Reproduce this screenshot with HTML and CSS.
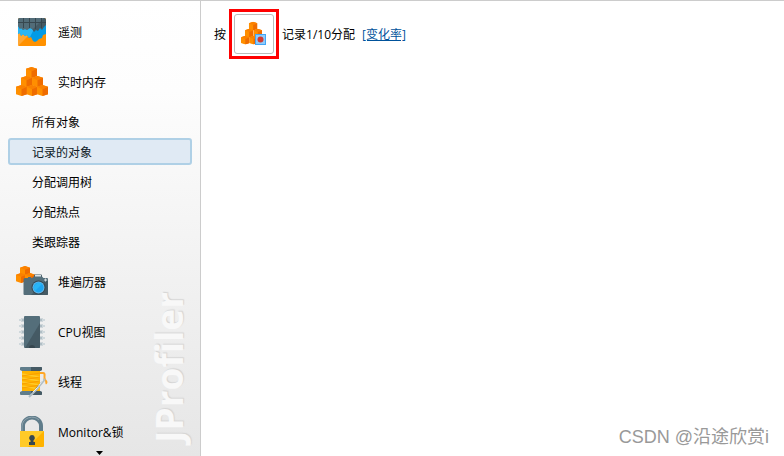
FILE: index.html
```html
<!DOCTYPE html>
<html lang="zh-CN">
<head>
<meta charset="utf-8">
<title>JProfiler</title>
<link rel="stylesheet" href="styles.css">
</head>
<body>
<svg class="defs" aria-hidden="true">
  <symbol id="cube" viewBox="0 0 12 12">
    <path fill="#ff8f00" d="M6 0 12 2v8l-6 2-6-2V2z"/>
    <path fill="#fb8100" d="M6 0 12 2 6 4.500 0 2z"/>
    <path fill="#ef6c00" d="M12 2v8l-6 2V4.500z"/>
  </symbol>
  <symbol id="cubes" viewBox="0 0 32 32">
    <use href="#cube" x="10" y="1" width="11" height="11"/>
    <use href="#cube" x="5" y="10" width="11" height="11"/>
    <use href="#cube" x="16" y="10" width="11" height="11"/>
    <use href="#cube" x="0" y="19" width="11" height="11"/>
    <use href="#cube" x="10.500" y="19" width="11" height="11"/>
    <use href="#cube" x="21" y="19" width="11" height="11"/>
  </symbol>
</svg>
<div class="app">
  <nav class="sidebar">
    <div class="brand" aria-hidden="true">JProfiler</div>
    <a class="section" href="#telemetry">
      <svg class="icon" viewBox="0 0 32 32">
        <rect x="2" y="2" width="28" height="28" rx="1.500" fill="#ff9100"/>
        <path fill="#ffa733" d="M2 12h18L2 30z"/>
        <path fill="#039be5" d="M2 9H30V18L27 19 26 22 23 23 21 25 19 26 17 25 15 21 13 22 11 19 9 20 7 18 5 20 4 17 2 18z"/>
        <path fill="#29b6f6" d="M2 9H20L14 21 13 22 11 19 9 20 7 18 5 20 4 17 2 18z"/>
        <path fill="#455a64" d="M2 3.500Q2 2 3.500 2H28.500Q30 2 30 3.500V9L28 11 26 14 24 12 22 15 20 14 18 16 16 13 14 12 11 14 9 13 7 14 5 12 4 13 2 10z"/>
        <path fill="#607d8b" opacity=".5" d="M2 3.500Q2 2 3.500 2H28L17 13 14 12 11 14 9 13 7 14 5 12 4 13 2 10z"/>
        <path stroke="#37474f" fill="none" d="M2 6.500h28M7.500 2v10M13.500 2v10M19.500 2v11M25.500 2v10"/>
      </svg>
      <span>遥测</span>
    </a>
    <a class="section" href="#live-memory">
      <svg class="icon" viewBox="0 0 32 32"><use href="#cubes"/></svg>
      <span>实时内存</span>
    </a>
    <a class="view" href="#all-objects">所有对象</a>
    <a class="view selected" href="#recorded-objects" aria-current="page">记录的对象</a>
    <a class="view" href="#allocation-tree">分配调用树</a>
    <a class="view" href="#allocation-hotspots">分配热点</a>
    <a class="view" href="#class-tracker">类跟踪器</a>
    <a class="section" href="#heap-walker">
      <svg class="icon" viewBox="0 0 32 32">
        <use href="#cube" x="4" y="0" width="10" height="10"/>
        <use href="#cube" x="0" y="7" width="10" height="10"/>
        <use href="#cube" x="9" y="7" width="10" height="10"/>
        <path fill="#455a64" d="M18 12V9.500Q18 8.500 19 8.500h6Q26 8.500 26 9.500V12z"/>
        <path fill="#dce3e6" d="M19 9h6v2h-6z"/>
        <path fill="#546e7a" d="M9 12h3v-1h3v1h1l2-1.500h8l1.500 1.500H31q1 0 1 1v15q0 1-1 1H8.500q-1 0-1-1V13.500Q7.500 12 9 12z"/>
        <path fill="#455a64" d="M32 15v13q0 1-1 1H15l14-14z"/>
        <circle cx="22.500" cy="21.500" r="7" fill="#37474f"/>
        <circle cx="22.500" cy="21.500" r="6" fill="#64b5e6"/>
        <circle cx="22.500" cy="21.500" r="5" fill="#1ea5f0"/>
        <path fill="#29b6f6" d="M19 25a5 5 0 0 1 7-7z"/>
        <path stroke="#cfd8dc" d="M29.500 12.500v3M28 14h3"/>
      </svg>
      <span>堆遍历器</span>
    </a>
    <a class="section" href="#cpu">
      <svg class="icon" viewBox="0 0 32 32">
        <path stroke="#b0bec5" stroke-width="3" d="M5 4h22M5 10h22M5 16h22M5 22h22M5 28h22"/>
        <path stroke="#cfd8dc" stroke-width="2" d="M3 4h3M3 10h3M3 16h3M3 22h3M3 28h3M26 4h3M26 10h3M26 16h3M26 22h3M26 28h3"/>
        <rect x="8" width="16" height="32" rx="1" fill="#546e7a"/>
        <path fill="#455a64" d="M24 7v24q0 1-1 1H9z"/>
        <path fill="#37474f" d="M13 32a3 3 0 0 1 6 0z"/>
      </svg>
      <span>CPU视图</span>
    </a>
    <a class="section" href="#threads">
      <svg class="icon" viewBox="0 0 32 32">
        <path fill="#ffb300" d="M6 5h18v20H6z"/>
        <path stroke="#ffca28" stroke-width="1.500" fill="none" d="m6 8 18 3M6 12l18 3M6 16l18 3M6 20l18 3"/>
        <path stroke="#f9a000" fill="none" d="m6 10 18-3M6 14l18-3M6 18l18-3M6 22l18-3"/>
        <path fill="#607d8b" d="M5 1h20q1 0 1 1v2l-2 1H6L4 4V2q0-1 1-1zM6 25h18l2 1v2q0 1-1 1H5q-1 0-1-1v-2z"/>
        <path fill="#455a64" d="M15 1h10q1 0 1 1v2l-2 1h-9zM15 25h9l2 1v2q0 1-1 1H15z"/>
        <path fill="none" stroke="#ffa726" stroke-width="2" d="M24 7h3q2 0 1.500 3t1 4.500q2 2 0 3"/>
        <path stroke="#b0bec5" stroke-width="2" d="m13 31 7-7 9-11"/>
        <path stroke="#eceff1" d="m17 26 4-4 6-8"/>
      </svg>
      <span>线程</span>
    </a>
    <a class="section" href="#monitors">
      <svg class="icon" viewBox="0 0 32 32">
        <path fill="none" stroke="#607d8b" stroke-width="4" d="M7 17V10a9 8.500 0 0 1 18 0V17"/>
        <path fill="none" stroke="#90a4ae" d="M6 15v-5a10 9.500 0 0 1 17-6"/>
        <path fill="#ffb300" d="M4 15h24v15q0 1-1 1H5q-1 0-1-1z"/>
        <path fill="#ffca28" d="M4 15h24L12 31H5q-1 0-1-1z"/>
        <path fill="#37474f" d="M16 19a3 3 0 0 1 1.500 5.500V26H19v3h-6v-3h1.500v-1.500A3 3 0 0 1 16 19z"/>
      </svg>
      <span>Monitor&amp;锁</span>
    </a>
    <button class="more" type="button" aria-label="更多"><svg viewBox="0 0 7 4"><path d="M0 0h7L3.500 4z"/></svg></button>
  </nav>
  <main class="content">
    <p class="hint">
      <span>按</span>
      <span class="highlight">
        <button class="record" type="button" aria-label="记录分配">
          <svg viewBox="0 0 26 26">
            <use href="#cubes" width="25" height="25"/>
            <path fill="#42a5f5" d="M14 13h11v11H14z"/>
            <path fill="#90caf9" d="M15 14h9v9h-9z"/>
            <circle cx="19.500" cy="18.500" r="3" fill="#d33a2f"/>
          </svg>
        </button>
      </span>
      <span>记录1/10分配</span>
      <a class="rate" href="#rate">[变化率]</a>
    </p>
    <div class="credit">CSDN @沿途欣赏i</div>
  </main>
</div>
</body>
</html>
```
FILE: styles.css
```css
* {
  box-sizing: border-box;
}

body {
  margin: 0;
  font: 12px/18px "Open Sans", "Noto Sans CJK SC", sans-serif;
  color: #000;
  background: #fff;
}

.defs {
  position: absolute;
  width: 0;
  height: 0;
}

.app {
  display: grid;
  grid-template-columns: 201px 1fr;
  height: 100vh;
  overflow: hidden;
  border-top: 1px solid #ccc;
}

.sidebar {
  position: relative;
  overflow: hidden;
  padding: 6px 8px 0;
  border-right: 1px solid #ccc;
  background: linear-gradient(#fff 0, #fdfdfd 90px, #e6e6e6 100%);
}

.section,
.view {
  display: flex;
  align-items: center;
  color: inherit;
  text-decoration: none;
}

.section {
  position: relative;
  gap: 10px;
  height: 50px;
  padding-left: 8px;
}

.section span,
.hint > span:not(.highlight),
.rate {
  padding-top: 2px;
}

.icon {
  width: 32px;
  height: 32px;
}

.view {
  height: 27px;
  margin: 1px 0 2px;
  padding: 2px 0 0 22px;
  border: 2px solid transparent;
  border-radius: 3px;
}

.view + .view {
  margin-top: 3px;
}

.selected {
  color: #0c1824;
  background: #e0eaf4;
  border-color: #afd0e6;
}

.brand {
  position: absolute;
  right: 9px;
  bottom: 13px;
  writing-mode: vertical-rl;
  transform: rotate(180deg);
  font: bold 37px/44px "Open Sans", sans-serif;
  color: #f8f8f8;
  text-shadow: 1px 1px 1px #d4d4d4;
}

.more {
  position: absolute;
  bottom: 1px;
  left: 96px;
  display: flex;
  padding: 0;
  border: 0;
  background: none;
}

.more svg {
  width: 7px;
  height: 4px;
}

.content {
  display: flex;
  flex-direction: column;
  justify-content: space-between;
}

.hint {
  display: flex;
  align-items: center;
  gap: 3px;
  margin: 0;
  padding: 8px 13px;
}

.highlight {
  display: flex;
  padding: 2px;
  border: 3px solid #f00;
}

.record {
  display: flex;
  align-items: center;
  justify-content: center;
  width: 40px;
  height: 40px;
  padding: 0;
  border: 1px solid #bbb;
  border-radius: 3px;
  background: #fff;
}

.record svg {
  width: 26px;
  height: 26px;
}

.rate {
  margin-left: 4px;
  color: #00529b;
}

.credit {
  align-self: flex-end;
  padding: 0 15px 6px;
  font: 18px/26px "Liberation Sans", "Noto Sans CJK SC", sans-serif;
  color: #999;
}
```
